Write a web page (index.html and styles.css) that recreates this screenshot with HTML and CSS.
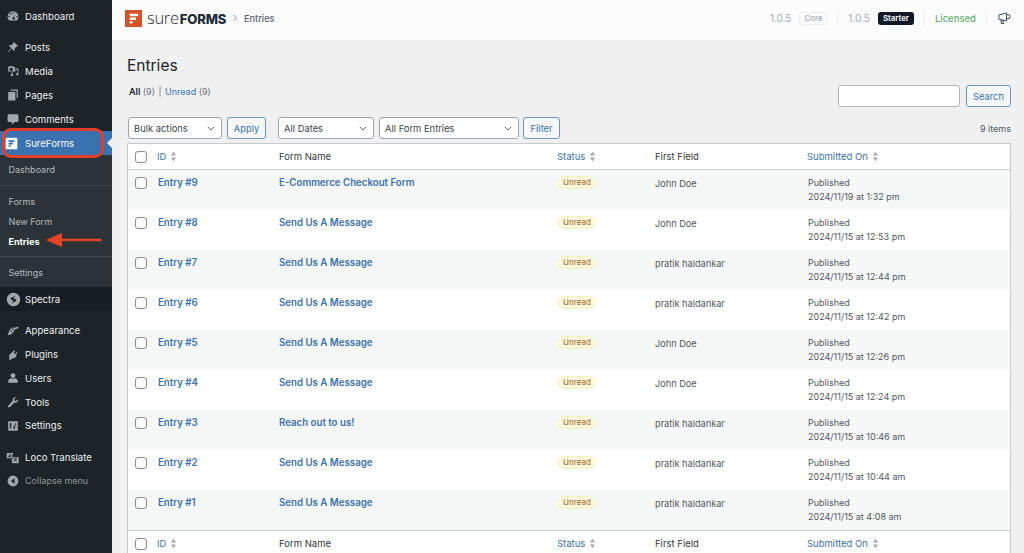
FILE: index.html
```html
<!DOCTYPE html>
<html lang="en">
<head>
<meta charset="utf-8">
<title>Entries</title>
<link rel="stylesheet" href="styles.css">
</head>
<body>
<div class="app">
  <aside class="sidebar">
    <a class="nav"><svg class="ic" viewBox="0 0 20 20"><path d="M10 2a9 9 0 0 0-9 9c0 2.500 1 4.700 2.600 6.300h12.800A9 9 0 0 0 19 11a9 9 0 0 0-9-9zM6 5a1.200 1.200 0 1 1 0 2.400A1.200 1.200 0 0 1 6 5zm4-1.300a1.200 1.200 0 1 1 0 2.400 1.200 1.200 0 0 1 0-2.400zM3.500 9.500a1.200 1.200 0 1 1 0 2.400 1.200 1.200 0 0 1 0-2.400zm13 0a1.200 1.200 0 1 1 0 2.400 1.200 1.200 0 0 1 0-2.400zM14.500 5.500l-3 6.600a2 2 0 1 1-2.300 1.400 2 2 0 0 1 1.200-1.500z"/></svg><span>Dashboard</span></a>
    <div class="nav-gap"></div>
    <a class="nav"><svg class="ic" viewBox="0 0 20 20"><path d="M11.500 1.500l7 7-1.500 1.200-1-.7-3.500 3.500c.6 1.700.3 3.200-.7 4.400L8 12.600l-5.500 5.900-1-1L7.300 12 3 7.700c1.200-1 2.700-1.300 4.400-.7L11 3.500l-.7-1z"/></svg><span>Posts</span></a>
    <a class="nav"><svg class="ic" viewBox="0 0 20 20"><path d="M2 2h9l1.500 2H14v7H2zm5 2.500a2.800 2.800 0 1 0 0 5.600 2.800 2.800 0 0 0 0-5.600zM15 6h4v9.500a2 2 0 1 1-1.500-2V8H15zM8 12h2v4.500a2 2 0 1 1-1.500-1.900V13H8z"/></svg><span>Media</span></a>
    <a class="nav"><svg class="ic" viewBox="0 0 20 20"><path d="M6 1h12v14h-2V3H6zM2 5h12v14H2z"/></svg><span>Pages</span></a>
    <a class="nav"><svg class="ic" viewBox="0 0 20 20"><path d="M3 2h14a2 2 0 0 1 2 2v9a2 2 0 0 1-2 2h-4l-5 4v-4H3a2 2 0 0 1-2-2V4a2 2 0 0 1 2-2z"/></svg><span>Comments</span></a>
    <a class="nav nav-current"><svg class="ic logo-f" viewBox="0 0 20 20"><rect x="1" y="1" width="18" height="18" rx="1.500" fill="#fff"/><path d="M5.500 5h9v2.600h-9zM5.500 8.800h7v2.600h-7zM5.500 12.600h3.500V15H5.500z" fill="#2f6db0"/></svg><span>SureForms</span><i class="caret"></i></a>
    <div class="submenu">
      <a class="sub">Dashboard</a>
      <div class="sub-rule"></div>
      <a class="sub">Forms</a>
      <a class="sub">New Form</a>
      <a class="sub sub-on">Entries</a>
      <div class="sub-rule"></div>
      <a class="sub">Settings</a>
    </div>
    <a class="nav nav-dark"><svg class="ic ic-big" viewBox="0 0 20 20"><path fill-rule="evenodd" d="M10 1a9 9 0 1 1 0 18 9 9 0 0 1 0-18zm3.500 3.500L7 7.700c-1 .5-1 1.700-.2 2.300l3.600 2-3.900 3.500 6.500-3.200c1-.5 1-1.700.2-2.300L9.600 8z"/></svg><span>Spectra</span></a>
    <div class="nav-gap nav-gap-b"></div>
    <a class="nav nav-b"><svg class="ic" viewBox="0 0 20 20"><path d="M19 2.500l-6.500 2-4.700-.4 5.900 5.400-.4-2.500L19 5.500zM7 5L5 7.500l5 5 2.500-2zM4 8.500C3 12 2.500 14 1 17.500c3.500-1 6-2 8.800-4.300z"/></svg><span>Appearance</span></a>
    <a class="nav nav-b"><svg class="ic" viewBox="0 0 20 20"><path d="M12 2l1.500 1.200L11 6.500l2.500 1.800L16 5l1.500 1.200-2.800 3.600 1.300 1c-1 2.800-3.500 5-7 4.700L6.500 18H3.500l.3-3.700-.1-4.500z"/></svg><span>Plugins</span></a>
    <a class="nav nav-b"><svg class="ic" viewBox="0 0 20 20"><circle cx="10" cy="6" r="4"/><path d="M2 18v-2.500C2 12.500 5 11 7 10.500c1.800 1 4.200 1 6 0 2 .5 5 2 5 5V18z"/></svg><span>Users</span></a>
    <a class="nav nav-b"><svg class="ic" viewBox="0 0 20 20"><path d="M18.500 5.500c.4 2-.3 3.700-1.500 4.700-1.200 1-2.900 1.200-4.400.7L5 18.500c-.8.800-2.100.8-2.900 0-.8-.8-.7-2 .1-2.800l7.500-7.700c-.5-1.500-.2-3.100.8-4.300 1.100-1.200 2.900-1.900 4.600-1.400L12 5.500l.5 2.500 2.500.5z"/></svg><span>Tools</span></a>
    <a class="nav nav-b"><svg class="ic" viewBox="0 0 20 20"><path fill-rule="evenodd" d="M2 2h16v16H2zM5 5v3H3.800L6 11l2.200-3H7V5zm1 10v-2.500H7.500V10.800h-3v1.700H5V15zm8-10v2.500h-1.500v1.700h3V7.500H15V5zm-1 10v-3h1.200L12 9l-2.200 3H11v3z"/></svg><span>Settings</span></a>
    <div class="nav-gap nav-gap-c"></div>
    <a class="nav nav-loco"><svg class="ic ic-loco" viewBox="0 0 20 20"><path fill-rule="evenodd" d="M1 3h10v2.500H9.500V8H11v3H1zm4.500 1.500L3.300 9.800h1.300l.4-1h2l.2 1h1.300L6.200 4.500zM5.300 7.700l.5-1.400.5 1.400zM9 9.500h10.500V19H9zm2.500 2v1.200h2.200v1l-2.200 1.500.7 1 2.100-1.400 2.200 1.400.7-1-2.100-1.400v-1.100H17v-1.200z"/></svg><span>Loco Translate</span></a>
    <a class="nav nav-muted"><svg class="ic" viewBox="0 0 20 20"><path fill-rule="evenodd" d="M10 1a9 9 0 1 1 0 18 9 9 0 0 1 0-18zm2.500 4.500L6.500 10l6 4.500z"/></svg><span>Collapse menu</span></a>
    <svg class="mark-arrow" viewBox="0 0 60 18"><path d="M58 8.300H17V2.500L2 9l15 6.500V9.800h41z" fill="#e5432b" stroke="#e5432b" stroke-width="1.200" stroke-linejoin="round"/></svg>
    <div class="mark-box"></div>
  </aside>

  <div class="column">
    <header class="topbar">
      <div class="brand">
        <svg class="brand-mark" viewBox="0 0 18 18"><rect width="18" height="18" fill="#d2542a"/><path d="M5 4h9v2.600H5zM5 8h6.500v2.600H5zM5 12h3v2.400H5z" fill="#fff"/></svg>
        <span class="brand-name"><span class="brand-thin">sure</span><b>FORMS</b></span>
        <svg class="crumb" viewBox="0 0 6 8"><path d="M1.500 1l3 3-3 3" fill="none" stroke="#8a9099" stroke-width="1"/></svg>
        <span class="crumb-text">Entries</span>
      </div>
      <div class="meta">
        <span class="ver">1.0.5</span><span class="badge-core">Core</span>
        <i class="vr"></i>
        <span class="ver">1.0.5</span><span class="badge-starter">Starter</span>
        <i class="vr"></i>
        <span class="licensed">Licensed</span>
        <i class="vr"></i>
        <svg class="mega" viewBox="0 0 14 14"><path d="M1 3.200l8.200-2v8.200L1 7.800zM9.200 3h2.300c1 0 1.500.9 1.500 2s-.5 2-1.500 2H9.200M3 8.200l.7 4.300h2.100l-.6-3.800" fill="none" stroke="#4b5563" stroke-width="1.100" stroke-linejoin="round"/></svg>
      </div>
    </header>

    <main class="main">
      <h1 class="title">Entries</h1>
      <div class="views-row">
        <div class="views"><b>All</b> <span class="count">(9)</span> <span class="sep">|</span> <a class="link">Unread</a> <span class="count">(9)</span></div>
        <div class="searchbox"><input class="search-input" type="text" aria-label="Search"><button class="btn btn-search">Search</button></div>
      </div>
      <div class="tablenav">
        <div class="select sel-bulk"><span>Bulk actions</span><svg class="chev" viewBox="0 0 10 6"><path d="M1 1l4 4 4-4" fill="none" stroke="#50575e" stroke-width="1.200"/></svg></div>
        <button class="btn btn-apply">Apply</button>
        <div class="select sel-date"><span>All Dates</span><svg class="chev" viewBox="0 0 10 6"><path d="M1 1l4 4 4-4" fill="none" stroke="#50575e" stroke-width="1.200"/></svg></div>
        <div class="select sel-form"><span>All Form Entries</span><svg class="chev" viewBox="0 0 10 6"><path d="M1 1l4 4 4-4" fill="none" stroke="#50575e" stroke-width="1.200"/></svg></div>
        <button class="btn btn-filter">Filter</button>
        <span class="items">9 items</span>
      </div>

      <table class="entries">
        <colgroup><col class="c-check"><col class="c-id"><col class="c-form"><col class="c-status"><col class="c-first"><col></colgroup>
        <thead>
          <tr><th><i class="cb"></i></th><th class="link">ID<svg class="sort" viewBox="0 0 8 12"><path d="M4 .5l3 4.300H1zM4 11.500l3-4.300H1z"/></svg></th><th>Form Name</th><th class="link">Status<svg class="sort" viewBox="0 0 8 12"><path d="M4 .5l3 4.300H1zM4 11.500l3-4.300H1z"/></svg></th><th>First Field</th><th class="link">Submitted On<svg class="sort" viewBox="0 0 8 12"><path d="M4 .5l3 4.300H1zM4 11.500l3-4.300H1z"/></svg></th></tr>
        </thead>
        <tbody>
          <tr><td><i class="cb"></i></td><td class="strong">Entry #9</td><td class="strong">E-Commerce Checkout Form</td><td><span class="pill">Unread</span></td><td class="first">John Doe</td><td class="date">Published<br>2024/11/19 at 1:32 pm</td></tr>
          <tr><td><i class="cb"></i></td><td class="strong">Entry #8</td><td class="strong">Send Us A Message</td><td><span class="pill">Unread</span></td><td class="first">John Doe</td><td class="date">Published<br>2024/11/15 at 12:53 pm</td></tr>
          <tr><td><i class="cb"></i></td><td class="strong">Entry #7</td><td class="strong">Send Us A Message</td><td><span class="pill">Unread</span></td><td class="first">pratik haldankar</td><td class="date">Published<br>2024/11/15 at 12:44 pm</td></tr>
          <tr><td><i class="cb"></i></td><td class="strong">Entry #6</td><td class="strong">Send Us A Message</td><td><span class="pill">Unread</span></td><td class="first">pratik haldankar</td><td class="date">Published<br>2024/11/15 at 12:42 pm</td></tr>
          <tr><td><i class="cb"></i></td><td class="strong">Entry #5</td><td class="strong">Send Us A Message</td><td><span class="pill">Unread</span></td><td class="first">John Doe</td><td class="date">Published<br>2024/11/15 at 12:26 pm</td></tr>
          <tr><td><i class="cb"></i></td><td class="strong">Entry #4</td><td class="strong">Send Us A Message</td><td><span class="pill">Unread</span></td><td class="first">John Doe</td><td class="date">Published<br>2024/11/15 at 12:24 pm</td></tr>
          <tr><td><i class="cb"></i></td><td class="strong">Entry #3</td><td class="strong">Reach out to us!</td><td><span class="pill">Unread</span></td><td class="first">pratik haldankar</td><td class="date">Published<br>2024/11/15 at 10:46 am</td></tr>
          <tr><td><i class="cb"></i></td><td class="strong">Entry #2</td><td class="strong">Send Us A Message</td><td><span class="pill">Unread</span></td><td class="first">pratik haldankar</td><td class="date">Published<br>2024/11/15 at 10:44 am</td></tr>
          <tr><td><i class="cb"></i></td><td class="strong">Entry #1</td><td class="strong">Send Us A Message</td><td><span class="pill">Unread</span></td><td class="first">pratik haldankar</td><td class="date">Published<br>2024/11/15 at 4:08 am</td></tr>
        </tbody>
        <tfoot>
          <tr><th><i class="cb"></i></th><th class="link">ID<svg class="sort" viewBox="0 0 8 12"><path d="M4 .5l3 4.300H1zM4 11.500l3-4.300H1z"/></svg></th><th>Form Name</th><th class="link">Status<svg class="sort" viewBox="0 0 8 12"><path d="M4 .5l3 4.300H1zM4 11.500l3-4.300H1z"/></svg></th><th>First Field</th><th class="link">Submitted On<svg class="sort" viewBox="0 0 8 12"><path d="M4 .5l3 4.300H1zM4 11.500l3-4.300H1z"/></svg></th></tr>
        </tfoot>
      </table>
    </main>
  </div>
</div>
</body>
</html>
```
FILE: styles.css
```css
* { box-sizing: border-box; }
html, body { margin: 0; height: 100%; overflow: hidden; }
body { font-family: Inter, "Liberation Sans", sans-serif; font-size: 10px; color: #3c434a; background: #f0f0f1; }
.app { display: flex; height: 553px; overflow: hidden; }

/* Sidebar */
.sidebar { position: relative; flex: 0 0 112px; background: #1d2327; padding-top: 4px; color: #f0f0f1; }
.nav { position: relative; display: flex; align-items: center; height: 24px; padding-left: 7px; font-size: 9.600px; color: #eceef0; }
.nav-b { height: 23.750px; }
.nav .ic { width: 12px; height: 12px; margin-right: 6px; fill: #a2a7ab; flex: none; }
.nav .ic-big { width: 15px; height: 15px; margin-left: -1px; margin-right: 4px; }
.nav .ic-loco { width: 13px; height: 13px; margin-left: -1px; }
.nav-gap { height: 7px; }
.nav-gap-b { height: 8px; }
.nav-gap-c { height: 7.500px; }
.nav-loco { height: 23.500px; }
.nav-current { background: #3a71b0; color: #fff; }
.nav .logo-f { width: 13px; height: 13px; margin-left: -2px; margin-right: 7px; }
.caret { position: absolute; right: 0; top: 7px; width: 0; height: 0; border: 5px solid transparent; border-right-color: #f0f0f1; border-left-width: 0; }
.submenu { background: #2c3338; padding: 4.500px 0 0; height: 132px; }
.sub { display: flex; align-items: center; height: 20px; padding-left: 8.500px; font-size: 9px; color: #b4b9be; }
.sub-on { color: #fff; font-weight: 700; }
.sub-rule { height: 1px; margin: 5px 0 5.500px; background: #3f474d; }
.sub-rule:nth-child(6) { margin-top: 4.500px; }
.nav-dark { background: #191e22; }
.nav-muted { color: #8e9499; font-size: 9px; }
.mark-box { position: absolute; left: 1.500px; top: 127.500px; width: 102px; height: 30px; border: 3px solid #e2402a; border-radius: 9px; }
.mark-arrow { position: absolute; left: 45px; top: 231px; width: 58px; height: 18px; }

/* Column */
.column { flex: 1; min-width: 0; display: flex; flex-direction: column; }
.topbar { flex: 0 0 40px; display: flex; align-items: center; justify-content: space-between; background: #fcfcfd; padding: 0 13px 4px 13px; }
.brand { display: flex; align-items: center; }
.brand-mark { width: 17px; height: 17px; flex: none; margin-right: 5px; }
.brand-name { display: flex; align-items: baseline; color: #1f2937; line-height: 1; width: 82px; }
.brand-thin { font-family: "Open Sans", sans-serif; font-weight: 300; font-size: 16.500px; letter-spacing: -.3px; }
.brand-name b { font-family: Inter, sans-serif; font-size: 13px; font-weight: 800; letter-spacing: -.1px; margin-left: 1px; }
.crumb { width: 6px; height: 8px; margin-left: 3px; margin-right: 6px; }
.crumb-text { font-size: 9.200px; color: #5b6470; font-weight: 500; }
.meta { display: flex; align-items: center; }
.ver { font-size: 10px; color: #a4abb6; }
.badge-core { margin-left: 8px; height: 13px; line-height: 11px; padding: 0 4px; font-size: 7.800px; color: #a4abb6; border: 1px solid #eceef2; border-radius: 3px; font-weight: 500; }
.badge-starter { margin-left: 8px; height: 13px; line-height: 13px; padding: 0 5px; font-size: 7.800px; color: #fff; background: #111827; border-radius: 3px; font-weight: 600; }
.vr { width: 1px; height: 14px; background: #eceef2; margin: 0 10px; }
.licensed { font-size: 9.500px; color: #62b26f; font-weight: 500; }
.mega { width: 13px; height: 13px; margin-left: 1px; }

/* Main */
.main { flex: 1; min-height: 0; padding: 0 13px 0 15px; }
.title { margin: 16px 0 0; font-size: 15.500px; line-height: 20px; font-weight: 400; color: #1d2327; }
.views-row { display: flex; justify-content: space-between; align-items: flex-start; margin-top: 9px; height: 32px; }
.views { font-size: 9px; line-height: 14px; margin: 0 0 0 2px; color: #50575e; }
.views b { color: #1d2327; font-weight: 600; }
.count { color: #6b7177; }
.sep { color: #6b7177; margin: 0 1px; }
.link { color: #3a71b0; }
.searchbox { display: flex; gap: 6px; }
.search-input { width: 122px; height: 22px; border: 1px solid #b5b7ba; border-radius: 3px; background: #fff; padding: 0; }
.btn { height: 22px; padding: 0; background: #f6f7f7; border: 1px solid #6a97c6; border-radius: 3px; font-family: inherit; font-size: 9.300px; color: #3a71b0; }
.btn-search { width: 45px; }
.tablenav { display: flex; align-items: center; height: 22px; }
.select { display: flex; align-items: center; justify-content: space-between; height: 22px; padding: 0 6px 0 5px; background: #fff; border: 1px solid #a2a5a9; border-radius: 3px; font-size: 9.400px; color: #3c434a; }
.chev { width: 8px; height: 5px; }
.sel-bulk { width: 94px; margin-left: 1px; }
.btn-apply { width: 39px; margin-left: 5px; }
.sel-date { width: 96px; margin-left: 12px; }
.sel-form { width: 140px; margin-left: 5px; }
.btn-filter { width: 37px; margin-left: 4px; }
.items { margin-left: auto; font-size: 9px; color: #50575e; }

/* Table */
.entries { width: 884px; margin-top: 4px; table-layout: fixed; border-collapse: separate; border-spacing: 0; background: #fff; border: 1px solid #c9cbce; }
.c-check { width: 23px; }
.c-id { width: 122px; }
.c-form { width: 278px; }
.c-status { width: 98px; }
.c-first { width: 152px; }
.entries th { height: 26px; padding: 0 6px; font-size: 9.500px; font-weight: 400; text-align: left; color: #32373c; white-space: nowrap; vertical-align: middle; }
.entries th.link { color: #3a71b0; }
.entries thead th { border-bottom: 1px solid #c9cbce; }
.entries tfoot th { border-top: 1px solid #c9cbce; }
.entries td { height: 40px; padding: 6px 6px 0; font-size: 9.200px; line-height: 14px; vertical-align: top; color: #50575e; white-space: nowrap; }
.entries tbody tr:nth-child(odd) td { background: #f6f7f7; }
.entries th:first-child, .entries td:first-child { padding: 0 0 0 7px; }
.entries td:first-child { padding-top: 7px; }
.cb { display: block; width: 12px; height: 12px; background: #fff; border: 1px solid #8c8f94; border-radius: 3px; }
.sort { width: 7px; height: 11px; margin-left: 4px; vertical-align: -2px; fill: #a7aaad; }
.strong { font-weight: 600; color: #3a71b0 !important; font-size: 9.700px !important; }
.entries td.strong:nth-child(2) { padding-left: 7px; }
.first { padding-top: 7px !important; }
.date { padding: 5.500px 6px 0 7px !important; font-size: 9px !important; }
.pill { display: inline-block; height: 13px; line-height: 11px; margin: 0 0 0 1px; padding: 0 4px; font-size: 8px; font-weight: 500; color: #a8762f; background: #fefae3; border: 1px solid #fdeeb5; border-radius: 7px; vertical-align: top; }
```
